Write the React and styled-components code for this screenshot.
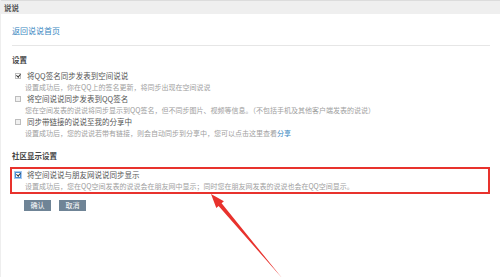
import React from 'react'
import styled, { createGlobalStyle } from 'styled-components'

const GlobalStyle = createGlobalStyle`
  html, body {
    margin: 0;
    padding: 0;
    background: #fff;
  }
  body {
    font-family: "Noto Sans CJK SC", "Noto Sans", sans-serif;
  }
`

const Page = styled.div`
  position: relative;
  width: 500px;
  height: 277px;
  overflow: hidden;
  border-left: 1px solid #eee;
  box-sizing: border-box;
`

const Header = styled.div`
  height: 13px;
  border-top: 1px solid #dcdcdc;
  background: #efefef;
  padding-left: 3px;
  font-size: 7.5px;
  line-height: 13px;
  font-weight: bold;
  color: #555;
`

const Body = styled.div`
  padding: 0 10px 0 11px;
`

const BackLink = styled.div`
  padding: 12px 0 9px;
  border-bottom: 1px solid #e6e6e6;
  font-size: 8px;
  line-height: 10px;
  color: #3a87bf;
`

const SectionTitle = styled.div`
  margin-top: ${p => p.top}px;
  font-size: 7.5px;
  line-height: 10px;
  font-weight: bold;
  color: #444;
`

const List = styled.div`
  display: flex;
  flex-direction: column;
  gap: 2px;
  margin-top: 6px;
`

const Item = styled.div`
  display: flex;
  flex-direction: column;
  gap: 1px;
`

const Label = styled.div`
  display: flex;
  align-items: center;
  font-size: 7.5px;
  line-height: 10px;
  color: #555;
`

const Check = styled.span`
  position: relative;
  width: 4px;
  height: 4px;
  margin: 0 6px 0 3px;
  border: 1px solid ${p => (p.focus ? '#4d90d6' : '#bdbdbd')};
  background: ${p => (p.checked ? '#fff' : '#f0f0f0')};
  box-shadow: ${p => (p.focus ? '0 0 0 1px #a9c9ee' : 'none')};
  &::after {
    content: '';
    display: ${p => (p.checked ? 'block' : 'none')};
    position: absolute;
    left: 1px;
    top: -1px;
    width: 1.5px;
    height: 3px;
    border: solid #333;
    border-width: 0 1px 1px 0;
    transform: rotate(40deg);
  }
`

const Desc = styled.div`
  padding-left: 13px;
  font-size: 7px;
  line-height: 10px;
  color: #a0a0a0;
  white-space: nowrap;
`

const Blue = styled.span`
  color: #3a87bf;
`

const Highlight = styled.div`
  align-self: flex-start;
  margin: 6px 0 0 -2px;
  padding: 1px 10px 1px 0;
  border: 2px solid #e8322d;
  display: flex;
  flex-direction: column;
  gap: 1px;
`

const Buttons = styled.div`
  display: flex;
  gap: 8px;
  margin: 6px 0 0 12px;
`

const Button = styled.div`
  width: 27px;
  height: 11px;
  background: #6f8496;
  color: #fff;
  font-size: 7px;
  line-height: 11px;
  text-align: center;
`

const Arrow = styled.svg`
  position: absolute;
  left: 0;
  top: 0;
  pointer-events: none;
`

const settings = [
  {
    label: '将QQ签名同步发表到空间说说',
    desc: '设置成功后，你在QQ上的签名更新，将同步出现在空间说说',
    checked: true,
  },
  {
    label: '将空间说说同步发表到QQ签名',
    desc: '您在空间发表的说说将同步显示到QQ签名，但不同步图片、视频等信息。（不包括手机及其他客户端发表的说说）',
  },
  {
    label: '同步带链接的说说至我的分享中',
    desc: '设置成功后，您的说说若带有链接，则会自动同步到分享中，您可以点击这里查看',
    link: '分享',
  },
]

export default function App() {
  return (
    <Page>
      <GlobalStyle />
      <Header>说说</Header>
      <Body>
        <BackLink>返回说说首页</BackLink>
        <SectionTitle top={9}>设置</SectionTitle>
        <List>
          {settings.map(s => (
            <Item key={s.label}>
              <Label>
                <Check checked={s.checked} />
                {s.label}
              </Label>
              <Desc>
                {s.desc}
                {s.link && <Blue>{s.link}</Blue>}
              </Desc>
            </Item>
          ))}
        </List>
        <SectionTitle top={13}>社区显示设置</SectionTitle>
        <Highlight>
          <Label>
            <Check checked focus />
            将空间说说与朋友网说说同步显示
          </Label>
          <Desc>设置成功后，您在QQ空间发表的说说会在朋友网中显示；同时您在朋友网发表的说说也会在QQ空间显示。</Desc>
        </Highlight>
        <Buttons>
          <Button>确认</Button>
          <Button>取消</Button>
        </Buttons>
      </Body>
      <Arrow width="500" height="277" viewBox="0 0 500 277">
        <polygon
          points="210,194 222.9,201.3 220.6,203.3 281,278 217.6,205.9 215.3,207.9"
          fill="#e8322d"
        />
      </Arrow>
    </Page>
  )
}
